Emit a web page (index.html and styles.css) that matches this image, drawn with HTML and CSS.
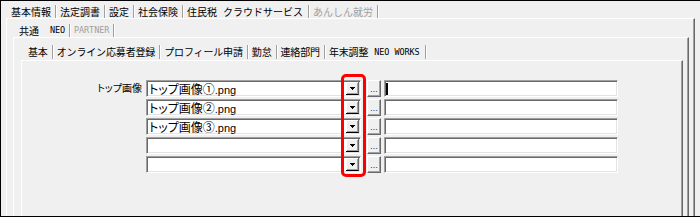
FILE: index.html
```html
<!DOCTYPE html>
<html lang="ja">
<head>
<meta charset="utf-8">
<title>NEO WORKS</title>
<link rel="stylesheet" href="styles.css">
</head>
<body>
<div class="window">
  <div class="tabs tabs-main">
    <div class="tab">基本情報</div>
    <div class="tab">法定調書</div>
    <div class="tab">設定</div>
    <div class="tab">社会保険</div>
    <div class="tab pre">住民税</div>
    <div class="tab sel">クラウドサービス</div>
    <div class="tab off">あんしん就労</div>
  </div>
  <div class="panel panel-1">
    <div class="tabs tabs-sub">
      <div class="tab pre">共通</div>
      <div class="tab sel lat">NEO</div>
      <div class="tab off lat">PARTNER</div>
    </div>
    <div class="panel panel-2">
      <div class="tabs tabs-inner">
        <div class="tab">基本</div>
        <div class="tab">オンライン応募者登録</div>
        <div class="tab">プロフィール申請</div>
        <div class="tab">勤怠</div>
        <div class="tab">連絡部門</div>
        <div class="tab pre">年末調整</div>
        <div class="tab sel lat">NEO WORKS</div>
      </div>
      <div class="panel panel-3">
        <div class="form">
          <div class="row">
            <div class="label">トップ画像</div>
            <div class="combo sunken"><div class="value">トップ画像①<span class="ext">.png</span></div><div class="drop"><svg width="5" height="3" viewBox="0 0 5 3" shape-rendering="crispEdges"><path d="M0 0h5v1h-1v1h-1v1h-1v-1h-1v-1h-1z" fill="#000"/></svg></div></div>
            <div class="browse">...</div>
            <div class="input sunken"><span class="caret"></span></div>
          </div>
          <div class="row">
            <div class="label"></div>
            <div class="combo sunken"><div class="value">トップ画像②<span class="ext">.png</span></div><div class="drop"><svg width="5" height="3" viewBox="0 0 5 3" shape-rendering="crispEdges"><path d="M0 0h5v1h-1v1h-1v1h-1v-1h-1v-1h-1z" fill="#000"/></svg></div></div>
            <div class="browse">...</div>
            <div class="input sunken"></div>
          </div>
          <div class="row">
            <div class="label"></div>
            <div class="combo sunken"><div class="value">トップ画像③<span class="ext">.png</span></div><div class="drop"><svg width="5" height="3" viewBox="0 0 5 3" shape-rendering="crispEdges"><path d="M0 0h5v1h-1v1h-1v1h-1v-1h-1v-1h-1z" fill="#000"/></svg></div></div>
            <div class="browse">...</div>
            <div class="input sunken"></div>
          </div>
          <div class="row">
            <div class="label"></div>
            <div class="combo sunken"><div class="value"></div><div class="drop"><svg width="5" height="3" viewBox="0 0 5 3" shape-rendering="crispEdges"><path d="M0 0h5v1h-1v1h-1v1h-1v-1h-1v-1h-1z" fill="#000"/></svg></div></div>
            <div class="browse">...</div>
            <div class="input sunken"></div>
          </div>
          <div class="row">
            <div class="label"></div>
            <div class="combo sunken"><div class="value"></div><div class="drop"><svg width="5" height="3" viewBox="0 0 5 3" shape-rendering="crispEdges"><path d="M0 0h5v1h-1v1h-1v1h-1v-1h-1v-1h-1z" fill="#000"/></svg></div></div>
            <div class="browse">...</div>
            <div class="input sunken"></div>
          </div>
        </div>
      </div>
    </div>
  </div>
</div>
<div class="highlight"></div>
</body>
</html>
```

FILE: styles.css
```css
* { box-sizing: border-box; }
html, body { margin: 0; padding: 0; }
body {
  position: relative;
  width: 700px;
  height: 217px;
  background: #f0f0f0;
  border: 1px solid #000;
  border-right: none;
  overflow: hidden;
  font-family: "Noto Sans CJK JP", "Noto Sans", sans-serif;
  font-size: 10px;
  color: #000;
}
.window {
  display: flex;
  flex-direction: column;
  height: 100%;
  padding-left: 5px;
}
.tabs { display: flex; flex: none; align-items: flex-start; }
.tabs-main { height: 17px; padding: 4px 0 0 1px; }
.tabs-sub { height: 18px; padding: 5px 0 0 2px; }
.tabs-inner { height: 22px; padding: 7px 0 0 3px; letter-spacing: -0.15px; }
.tab {
  height: 13px;
  line-height: 13px;
  padding: 0 4px;
  border-right: 1px solid #a0a0a0;
  box-shadow: 1px 0 0 #ffffff;
  white-space: nowrap;
}
.tabs-inner .tab { height: 14px; line-height: 14px; }
.tab.pre { border-right: none; box-shadow: none; }
.tab.sel { padding-left: 2px; padding-right: 5px; }
.tabs-sub .tab.sel { padding-left: 7px; padding-right: 4px; }
.tab.off { color: #a0a0a0; }
.tab.lat {
  font-family: "DejaVu Sans Mono", monospace;
  font-size: 8.5px;
  letter-spacing: -0.1px;
}
.panel {
  display: flex;
  flex-direction: column;
  flex: 1;
  border-top: 1px solid #ffffff;
  border-left: 1px solid #ffffff;
  border-right: 1px solid #696969;
  box-shadow: inset -1px 0 0 #a0a0a0;
}
.panel-1 { width: 689px; padding-left: 6px; }
.panel-2 { width: 676px; padding-left: 7px; }
.panel-3 { width: 662px; }
.form {
  display: flex;
  flex-direction: column;
  gap: 2px;
  padding-top: 19px;
}
.row { display: flex; height: 17px; }
.label {
  width: 120px;
  margin-right: 4px;
  text-align: right;
  font-size: 10px;
  line-height: 16px;
  font-feature-settings: "palt";
  white-space: nowrap;
}
.sunken {
  background: #ffffff;
  border: 1px solid;
  border-color: #a0a0a0 #ffffff #ffffff #a0a0a0;
  box-shadow: inset 1px 1px 0 #696969, inset -1px -1px 0 #e3e3e3;
}
.combo {
  width: 215px;
  display: flex;
  padding: 1px;
}
.value {
  flex: 1;
  min-width: 0;
  padding-left: 1px;
  font-size: 12px;
  line-height: 13px;
  white-space: nowrap;
  font-feature-settings: "palt";
}
.ext { font-family: "Liberation Sans", sans-serif; font-size: 11px; }
.drop {
  width: 13px;
  flex: none;
  display: flex;
  align-items: center;
  justify-content: center;
  background: #f0f0f0;
  border-right: 1px solid #696969;
  border-bottom: 1px solid #000;
  box-shadow: inset 1px 1px 0 #ffffff, inset -1px -1px 0 #a0a0a0;
}
.browse {
  width: 14px;
  margin-left: 6px;
  display: flex;
  align-items: flex-end;
  justify-content: center;
  padding-bottom: 2px;
  background: #f0f0f0;
  border: 1px solid;
  border-color: #ffffff #696969 #696969 #ffffff;
  box-shadow: inset -1px -1px 0 #a0a0a0;
  font-family: "Liberation Sans", sans-serif;
  font-size: 9px;
  line-height: 9px;
  color: #333;
}
.input {
  width: 234px;
  margin-left: 3px;
  display: flex;
  padding: 1px 0 0 1px;
}
.caret {
  width: 2px;
  height: 12px;
  margin-top: 1px;
  background: #000;
}
.highlight {
  position: absolute;
  left: 340px;
  top: 73px;
  width: 25px;
  height: 103px;
  border: 3px solid #ff0000;
  border-radius: 5px;
}
```
